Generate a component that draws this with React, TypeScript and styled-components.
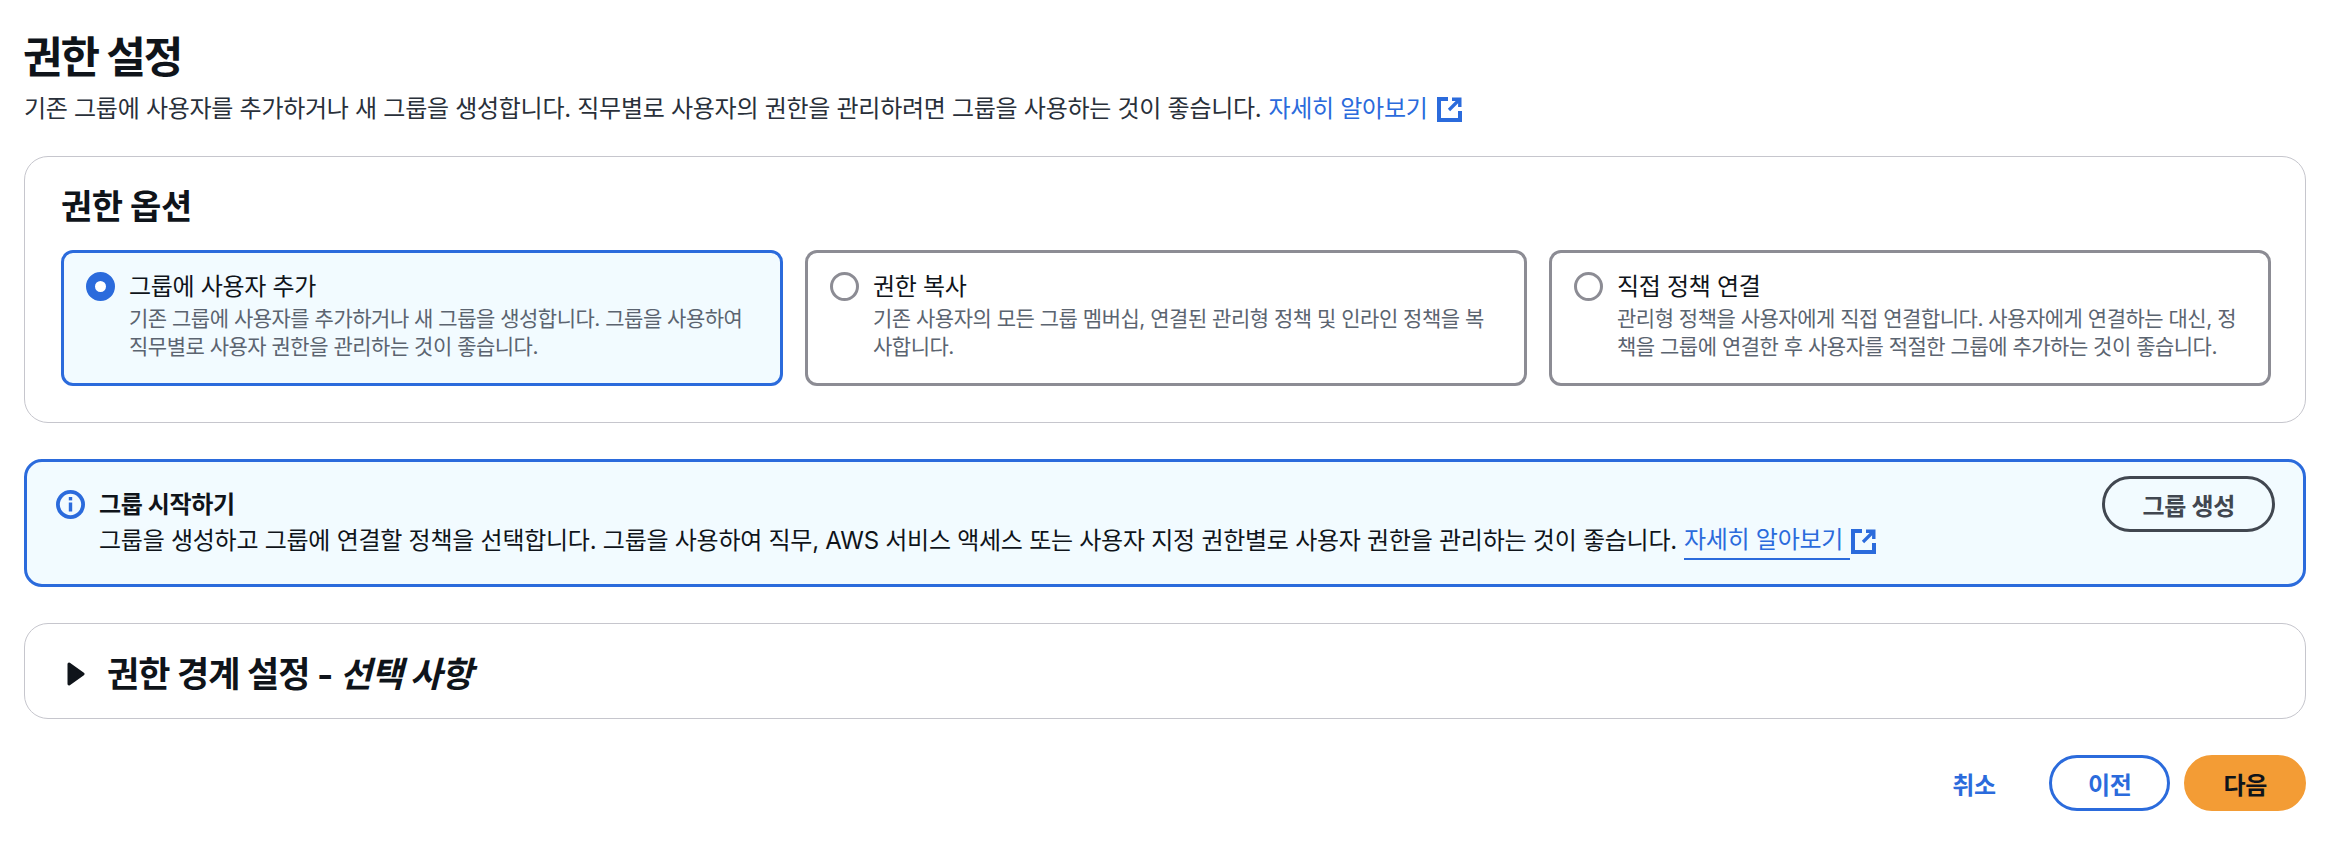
import styled, { createGlobalStyle } from 'styled-components'

const GlobalStyle = createGlobalStyle`
    html, body {
        margin: 0;
        padding: 0;
        background: #ffffff;
    }

    body {
        font-family: 'Inter', 'Noto Sans CJK KR', sans-serif;
        color: #0f141a;
    }

    * {
        box-sizing: border-box;
    }
`

const Page = styled.div`
    display: flex;
    flex-direction: column;
    height: 844px;
    padding: 30px 24px 0;
`

const Title = styled.h1`
    margin: 0;
    font-size: 43px;
    line-height: 54px;
    font-weight: 700;
    letter-spacing: -2px;
    text-indent: -1px;
`

const Subtitle = styled.p`
    display: flex;
    align-items: center;
    margin: 7px 0 0;
    font-size: 24px;
    line-height: 36px;
    letter-spacing: -0.28px;
    color: #29303a;
`

const Link = styled.a<{ $underline?: boolean }>`
    display: inline-block;
    margin-left: 7px;
    color: #2b6bdc;
    text-decoration: none;
    border-bottom: ${props => (props.$underline ? '2px solid #2b6bdc' : 'none')};
    padding-right: ${props => (props.$underline ? '7px' : '0')};
`

const LinkIcon = styled.svg<{ $tight?: boolean }>`
    flex: none;
    width: 25px;
    height: 25px;
    margin-left: ${props => (props.$tight ? '1px' : '9px')};
`

const Panel = styled.section`
    margin-top: 29px;
    padding: 27px 34px 36px 36px;
    border: 1.5px solid #c6c6cd;
    border-radius: 24px;
    background: #ffffff;
`

const PanelTitle = styled.h2`
    margin: 0 0 21px;
    font-size: 34px;
    line-height: 45px;
    font-weight: 700;
    letter-spacing: -0.5px;
`

const OptionGrid = styled.div`
    display: grid;
    grid-template-columns: repeat(3, 1fr);
    gap: 22px;
`

const OptionCard = styled.label<{ $selected?: boolean }>`
    display: flex;
    gap: 14px;
    height: 136px;
    padding: 19px 22px;
    border: 3px solid ${props => (props.$selected ? '#2b6bdc' : '#8c8c94')};
    border-radius: 12px;
    background: ${props => (props.$selected ? '#f2fbff' : '#ffffff')};
`

const Radio = styled.span<{ $selected?: boolean }>`
    flex: none;
    width: 29px;
    height: 29px;
    border-radius: 50%;
    border: ${props => (props.$selected ? '9px solid #2b6bdc' : '3px solid #8c8c94')};
    background: #ffffff;
`

const OptionBody = styled.div`
    display: flex;
    flex-direction: column;
`

const OptionLabel = styled.span`
    font-size: 24px;
    line-height: 30px;
    letter-spacing: -0.3px;
    color: #0f141a;
`

const OptionDescription = styled.span`
    margin-top: 3px;
    font-size: 21px;
    line-height: 28px;
    letter-spacing: -0.5px;
    color: #5b6470;
`

const InfoBanner = styled.section`
    display: flex;
    justify-content: space-between;
    height: 128px;
    margin-top: 36px;
    padding: 14px 28px 0 29px;
    border: 3px solid #2b6bdc;
    border-radius: 18px;
    background: #f2fbff;
`

const InfoContent = styled.div`
    display: flex;
    gap: 14px;
    padding-top: 14px;
`

const InfoIcon = styled.svg`
    flex: none;
    width: 29px;
    height: 29px;
`

const InfoText = styled.div`
    display: flex;
    flex-direction: column;
`

const InfoHeading = styled.strong`
    font-size: 24px;
    line-height: 30px;
    font-weight: 700;
    letter-spacing: -0.35px;
`

const InfoMessage = styled.p`
    display: flex;
    align-items: center;
    margin: 2px 0 0;
    font-size: 24px;
    line-height: 36px;
    letter-spacing: -0.26px;
    color: #0f141a;
`

const Button = styled.button<{ $variant: 'normal' | 'outline' | 'link' | 'primary' }>`
    flex: none;
    height: 56px;
    padding: 0 36px;
    border-radius: 28px;
    font-family: inherit;
    font-size: 24px;
    font-weight: 700;
    letter-spacing: -0.3px;
    border: 3px solid
        ${props =>
            props.$variant === 'normal'
                ? '#414750'
                : props.$variant === 'outline'
                  ? '#2b6bdc'
                  : props.$variant === 'primary'
                    ? '#f39c35'
                    : 'transparent'};
    background: ${props =>
        props.$variant === 'primary' ? '#f39c35' : 'transparent'};
    color: ${props =>
        props.$variant === 'normal'
            ? '#414750'
            : props.$variant === 'primary'
              ? '#0f141a'
              : '#2b6bdc'};
`

const CreateGroupButton = styled(Button)`
    padding: 0 37px;
`

const Expandable = styled.section`
    display: flex;
    align-items: center;
    gap: 22px;
    height: 96px;
    margin-top: 36px;
    padding: 6px 42px 0;
    border: 1.5px solid #c6c6cd;
    border-radius: 24px;
`

const Caret = styled.svg`
    flex: none;
    width: 18px;
    height: 24px;
`

const ExpandableTitle = styled.h2`
    margin: 0;
    font-size: 35px;
    line-height: 45px;
    font-weight: 700;
    letter-spacing: -0.9px;

    em {
        font-style: italic;
    }
`

const Footer = styled.div`
    display: flex;
    justify-content: flex-end;
    gap: 14px;
    margin-top: 36px;
`

function ExternalIcon({ tight }: { tight?: boolean }) {
    return (
        <LinkIcon $tight={tight} viewBox="0 0 25 25" fill="none" stroke="#2b6bdc" strokeWidth="4">
            <path d="M11 2H2v21h21V14" />
            <path d="M15 2.2h7.8V10" strokeWidth="3.4" />
            <path d="M12 13 22 3" strokeWidth="3.2" />
        </LinkIcon>
    )
}

function App() {
    return (
        <Page>
            <GlobalStyle />
            <Title>권한 설정</Title>
            <Subtitle>
                기존 그룹에 사용자를 추가하거나 새 그룹을 생성합니다. 직무별로 사용자의 권한을 관리하려면 그룹을 사용하는 것이 좋습니다.
                <Link>자세히 알아보기</Link>
                <ExternalIcon />
            </Subtitle>

            <Panel>
                <PanelTitle>권한 옵션</PanelTitle>
                <OptionGrid>
                    <OptionCard $selected>
                        <Radio $selected />
                        <OptionBody>
                            <OptionLabel>그룹에 사용자 추가</OptionLabel>
                            <OptionDescription>
                                기존 그룹에 사용자를 추가하거나 새 그룹을 생성합니다. 그룹을 사용하여 직무별로 사용자 권한을 관리하는 것이 좋습니다.
                            </OptionDescription>
                        </OptionBody>
                    </OptionCard>
                    <OptionCard>
                        <Radio />
                        <OptionBody>
                            <OptionLabel>권한 복사</OptionLabel>
                            <OptionDescription>
                                기존 사용자의 모든 그룹 멤버십, 연결된 관리형 정책 및 인라인 정책을 복사합니다.
                            </OptionDescription>
                        </OptionBody>
                    </OptionCard>
                    <OptionCard>
                        <Radio />
                        <OptionBody>
                            <OptionLabel>직접 정책 연결</OptionLabel>
                            <OptionDescription>
                                관리형 정책을 사용자에게 직접 연결합니다. 사용자에게 연결하는 대신, 정책을 그룹에 연결한 후 사용자를 적절한 그룹에 추가하는 것이 좋습니다.
                            </OptionDescription>
                        </OptionBody>
                    </OptionCard>
                </OptionGrid>
            </Panel>

            <InfoBanner>
                <InfoContent>
                    <InfoIcon viewBox="0 0 29 29" fill="none">
                        <circle cx="14.5" cy="14.5" r="12.6" stroke="#2b6bdc" strokeWidth="3.8" />
                        <rect x="12.8" y="12.5" width="3.4" height="9" fill="#2b6bdc" />
                        <rect x="12.8" y="7" width="3.4" height="3.4" fill="#2b6bdc" />
                    </InfoIcon>
                    <InfoText>
                        <InfoHeading>그룹 시작하기</InfoHeading>
                        <InfoMessage>
                            그룹을 생성하고 그룹에 연결할 정책을 선택합니다. 그룹을 사용하여 직무, AWS 서비스 액세스 또는 사용자 지정 권한별로 사용자 권한을 관리하는 것이 좋습니다.
                            <Link $underline>자세히 알아보기</Link>
                            <ExternalIcon tight />
                        </InfoMessage>
                    </InfoText>
                </InfoContent>
                <CreateGroupButton $variant="normal">그룹 생성</CreateGroupButton>
            </InfoBanner>

            <Expandable>
                <Caret viewBox="0 0 18 24">
                    <path d="M2 2 16 12 2 22Z" fill="#0f141a" stroke="#0f141a" strokeWidth="3" strokeLinejoin="round" />
                </Caret>
                <ExpandableTitle>
                    권한 경계 설정 - <em>선택 사항</em>
                </ExpandableTitle>
            </Expandable>

            <Footer>
                <Button $variant="link">취소</Button>
                <Button $variant="outline">이전</Button>
                <Button $variant="primary">다음</Button>
            </Footer>
        </Page>
    )
}

export default App
